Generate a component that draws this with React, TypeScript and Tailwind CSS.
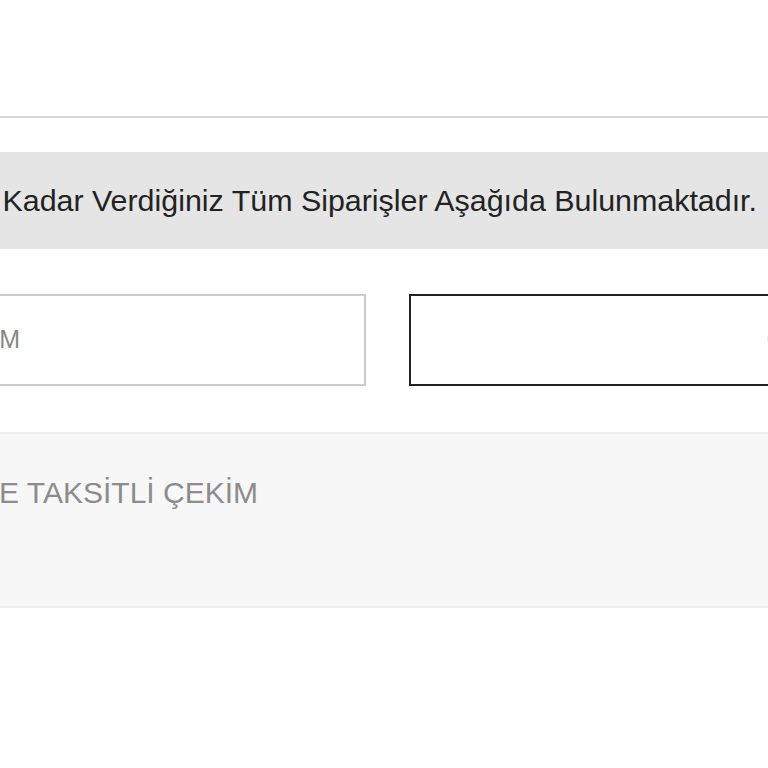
import React from 'react';

// Sipariş sayfası, sol kenardan taşan kırpılmış görünüm
export default function App() {
  return (
    <div className="w-[768px] h-[768px] overflow-hidden bg-white font-['Liberation_Sans',Arial,sans-serif]">
      <div className="pt-[116px]">
        <div className="border-t-2 border-[#d6d6d6]" />
      </div>

      {/* Bilgi bandı */}
      <div className="mt-[34px] h-[97px] bg-[#e5e5e5] flex items-center justify-end pr-[11px] overflow-hidden">
        <p className="shrink-0 whitespace-nowrap text-[30.4px] text-[#222]">
          Şu Ana Kadar Verdiğiniz Tüm Siparişler Aşağıda Bulunmaktadır.
        </p>
      </div>

      {/* Seçim kutuları */}
      <div className="mt-[45px] flex gap-[43px]">
        <div className="-ml-[2px] w-[368px] h-[92px] shrink-0 border-2 border-[#cccccc] flex items-center">
          <span className="w-[20px] flex justify-end whitespace-nowrap text-[25px] text-[#888]">
            TEK ÇEKİM
          </span>
        </div>
        <div className="w-[500px] h-[92px] shrink-0 border-2 border-[#222] flex items-center pl-[355px]">
          <span className="whitespace-nowrap text-[25px] text-[#e8e8e8]">ÇEKİM</span>
        </div>
      </div>

      {/* Taksit alanı */}
      <div className="mt-[46px] h-[176px] bg-[#f7f7f7] border-y-2 border-[#eeeeee] pt-[36px]">
        <span className="w-[258px] flex justify-end whitespace-nowrap text-[30px] text-[#8c8c8c]">
          PEŞİNE TAKSİTLİ ÇEKİM
        </span>
      </div>
    </div>
  );
}
